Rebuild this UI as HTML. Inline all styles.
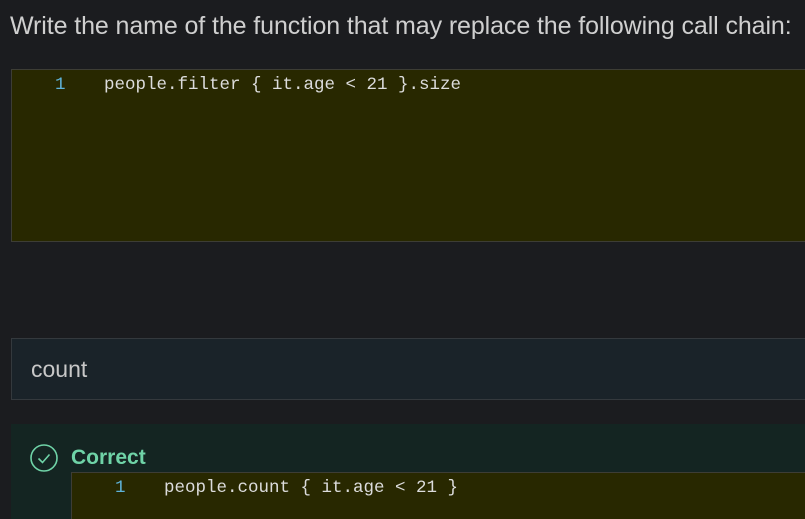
<!DOCTYPE html>
<html style="overflow:hidden;height:519px"><head><style>
body{margin:0;width:805px;height:519px;background:#1b1c1f;overflow:hidden;position:relative;font-family:"Liberation Sans","DejaVu Sans",sans-serif}
.t{position:absolute;left:10px;top:12px;color:#cfcfcf;font-size:25px;white-space:nowrap;letter-spacing:-0.1px}
.code{position:absolute;background:#282800;border:1px solid #3d3d35;font-family:"Liberation Mono",monospace;font-size:17.5px;color:#dcdcdc;box-sizing:border-box}
.code .n{position:absolute;color:#5fb3d9}
.code .c{position:absolute;white-space:pre}
.inp{position:absolute;left:11px;top:338px;width:800px;height:62px;background:#1a2329;border:1px solid #34393d;color:#c8c8c8;font-size:23px;box-sizing:border-box}
.ok{position:absolute;left:11px;top:424px;width:794px;height:95px;background:#142522}
</style></head><body>
<div class="t">Write the name of the function that may replace the following call chain:</div>
<div class="code" style="left:11px;top:69px;width:800px;height:173px">
<span class="n" style="left:43px;top:5px">1</span><span class="c" style="left:92px;top:5px">people.filter { it.age &lt; 21 }.size</span></div>
<div class="inp"><span style="position:absolute;left:19px;top:17px">count</span></div>
<div class="ok">
<svg style="position:absolute;left:19px;top:20px" width="28" height="28" viewBox="0 0 28 28"><circle cx="14" cy="14" r="13" fill="none" stroke="#6fd3a7" stroke-width="1.6"/><path d="M8.5 14.5l4 4 7-8" fill="none" stroke="#6fd3a7" stroke-width="1.6"/></svg>
<span style="position:absolute;left:60px;top:22px;color:#6fd3a7;font-weight:bold;font-size:21px">Correct</span>
</div>
<div class="code" style="left:71px;top:472px;width:740px;height:47px;border-bottom:none">
<span class="n" style="left:43px;top:5px">1</span><span class="c" style="left:92px;top:5px">people.count { it.age &lt; 21 }</span></div>
</body></html>
